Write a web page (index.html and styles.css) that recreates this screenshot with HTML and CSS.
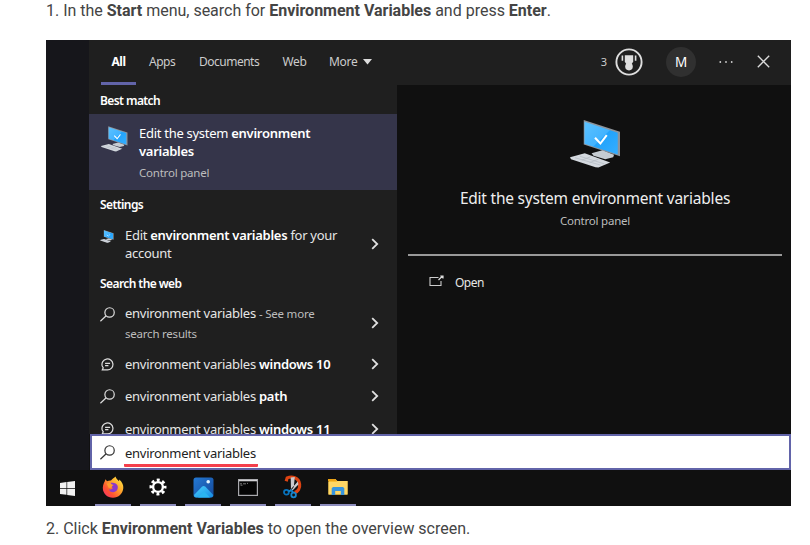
FILE: index.html
```html
<!DOCTYPE html>
<html lang="en">
<head>
<meta charset="utf-8">
<title>Environment Variables</title>
<link rel="stylesheet" href="styles.css">
</head>
<body>
<svg width="0" height="0" class="defs" aria-hidden="true">
  <defs>
    <linearGradient id="screen" x1="0" y1="0" x2="1" y2="1"><stop offset="0" stop-color="#5cc2ff"/><stop offset=".5" stop-color="#42b3ff"/><stop offset=".52" stop-color="#22a3fb"/><stop offset="1" stop-color="#35aeff"/></linearGradient>
    <linearGradient id="fox" x1="1" y1="0" x2="0" y2="1"><stop offset="0" stop-color="#fff24a"/><stop offset=".4" stop-color="#ffa52b"/><stop offset=".7" stop-color="#ff5232"/><stop offset="1" stop-color="#f52b7b"/></linearGradient>
    <linearGradient id="photo" x1="0" y1="0" x2="1" y2="1"><stop offset="0" stop-color="#2479d4"/><stop offset="1" stop-color="#144899"/></linearGradient>
    <linearGradient id="hill" x1="0" y1="0" x2="1" y2="1"><stop offset="0" stop-color="#48d4ff"/><stop offset="1" stop-color="#1688e0"/></linearGradient>
    <symbol id="computer" viewBox="0 0 52 49">
      <path d="M14 0 51 12V37L14 25Z" fill="#8d949c"/>
      <path d="M14.8 1.8 48.7 13V35.2L14.8 24.2Z" fill="url(#screen)"/>
      <path d="M25.5 18.2 31 24 37.5 15.5" fill="none" stroke="#fff" stroke-width="2.1"/>
      <path d="M22 34 33 31 45 35.5 44 38 36 40 24 36.5Z" fill="#c6ccd2"/>
      <path d="M0 38 15 34 41 43.5 29 48.5 26 48.3 1 40Z" fill="#d4d9df"/>
      <path d="M5 38.5 31 46M10 37 35 44.8M12 41 21 37.5M20 43.5 29 40" stroke="#b2b9c2" stroke-width=".7" fill="none"/>
    </symbol>
    <symbol id="search" viewBox="0 0 16 16"><circle cx="10.2" cy="5.8" r="5"/><path d="M6.6 9.4 .4 15.2"/></symbol>
    <symbol id="chat" viewBox="0 0 14 14"><path d="M1.4 12.8H7A5.9 5.9 0 1 0 1.3 8.6L2.4 10.5Z"/><path d="M4.4 5.7H9.8M4.4 8.2H8"/></symbol>
    <symbol id="chevron" viewBox="0 0 8 12"><path d="M1.2 1.2 6.2 6 1.2 10.8"/></symbol>
  </defs>
</svg>
<main class="article">
  <p class="step step-first">1. In the <b>Start</b> menu, search for <b>Environment Variables</b> and press <b>Enter</b>.</p>
  <section class="desktop">
    <div class="wallpaper"></div>
    <div class="start">
      <header class="topbar">
        <nav class="tabs">
          <span class="tab tab-all">All</span><span class="tab tab-apps">Apps</span><span class="tab tab-docs">Documents</span><span class="tab tab-web">Web</span><span class="tab tab-more">More</span>
          <svg class="caret" viewBox="0 0 9 6"><path d="M0 0H9L4.5 5.5Z" fill="#ddd"/></svg>
        </nav>
        <div class="account">
          <span class="points">3</span>
          <svg class="trophy" viewBox="0 0 28 28"><circle cx="14" cy="14" r="12.6" fill="none" stroke="#dedede" stroke-width="1.9"/><path d="M9.8 7.3H18.2V13.8L16.3 16.6H11.7L9.8 13.8Z" fill="#dedede"/><circle cx="14" cy="18.6" r="3.8" fill="#dedede"/><path d="M7.4 7.6V12.8M20.6 7.6V12.8" stroke="#dedede" stroke-width="1.6"/></svg>
          <span class="avatar">M</span>
          <svg class="dots" viewBox="0 0 14 4"><g fill="#cfcfcf"><circle cx="1.3" cy="2" r=".9"/><circle cx="7" cy="2" r=".9"/><circle cx="12.7" cy="2" r=".9"/></g></svg>
          <svg class="close" viewBox="0 0 13 13"><path d="M.8.8 12.2 12.2M12.2.8.8 12.2" stroke="#dcdcdc" stroke-width="1.3"/></svg>
        </div>
      </header>
      <div class="panes">
        <div class="results">
          <h2 class="group group-best">Best match</h2>
          <div class="best">
            <svg class="best-icon"><use href="#computer"/></svg>
            <div class="text"><div class="line">Edit the system <b>environment</b></div><div class="line"><b>variables</b></div><div class="sub sub-best">Control panel</div></div>
          </div>
          <h2 class="group group-settings">Settings</h2>
          <div class="row row-tall">
            <svg class="mini-icon"><use href="#computer"/></svg>
            <div class="text"><div class="line">Edit <b>environment variables</b> for your</div><div class="line">account</div></div>
            <svg class="chevron"><use href="#chevron"/></svg>
          </div>
          <h2 class="group group-web">Search the web</h2>
          <div class="row row-tall row-web">
            <svg class="glyph"><use href="#search"/></svg>
            <div class="text"><div class="line">environment variables <span class="sub">- See more</span></div><div class="sub sub-more">search results</div></div>
            <svg class="chevron"><use href="#chevron"/></svg>
          </div>
          <div class="row"><svg class="glyph chat"><use href="#chat"/></svg><div class="text line">environment variables <b>windows 10</b></div><svg class="chevron"><use href="#chevron"/></svg></div>
          <div class="row"><svg class="glyph"><use href="#search"/></svg><div class="text line">environment variables <b>path</b></div><svg class="chevron"><use href="#chevron"/></svg></div>
          <div class="row"><svg class="glyph chat"><use href="#chat"/></svg><div class="text line">environment variables <b>windows 11</b></div><svg class="chevron"><use href="#chevron"/></svg></div>
        </div>
        <div class="preview">
          <svg class="hero"><use href="#computer"/></svg>
          <div class="hero-title">Edit the system environment variables</div>
          <div class="sub hero-sub">Control panel</div>
          <div class="rule"></div>
          <div class="open"><svg class="open-icon" viewBox="0 0 15 12"><path d="M9.5 2.5H1V10.5H12V6" fill="none" stroke="#ccc" stroke-width="1.1"/><path d="M9.5 5 13.5 1M11.3 1H14V3.5" fill="none" stroke="#ddd" stroke-width="1.2"/></svg><span>Open</span></div>
        </div>
      </div>
      <div class="searchbox"><svg class="glyph"><use href="#search"/></svg><span class="query">environment variables</span></div>
    </div>
    <footer class="taskbar">
      <div class="task task-start"><svg width="15" height="15" viewBox="0 0 15 15"><path d="M0 2 6.5 1.1V7H0ZM7.2 1 15 0V7H7.2ZM0 7.8H6.5V13.8L0 12.9ZM7.2 7.8H15V15L7.2 13.9Z" fill="#f2f2f2"/></svg></div>
      <div class="task running"><svg width="22" height="22" viewBox="0 0 22 22"><path d="M3.5 3.2 5 5.2C6.3 4.6 8 4.3 9 4.5 10.5 2.9 12.2 1.8 13.5.6 14 3 16 4 17 5.3L17.3 3.5C20.3 6.3 21.5 9 21.3 12.1 20.9 17.9 16.5 21.8 11 21.8 5.4 21.8.8 17.8.8 11.8.8 8.2 2.6 6.3 3.5 3.2Z" fill="url(#fox)"/><path d="M6.2 8.2C8.3 6.2 14.3 6 15.6 9.8 16.5 13 14.4 16.2 11.1 16.2 8.8 16.2 7.3 14.8 7 13.4 8.5 14 10 13.2 11 12.1 8.9 11.5 9.4 10.4 11 9.8Z" fill="#8b38cb"/><path d="M4.6 7.4 8.5 6.8C9.3 8 9 8.5 11.8 9 10.3 9.4 9.5 10.4 9.6 11.4L6.8 12Z" fill="#ff9c2c"/></svg></div>
      <div class="task running"><svg width="18" height="18" viewBox="0 0 18 18"><circle cx="9" cy="9" r="4.9" fill="none" stroke="#fff" stroke-width="2.4"/><circle cx="9" cy="9" r="7" fill="none" stroke="#fff" stroke-width="3" stroke-dasharray="2.9 2.598" stroke-dashoffset="1.45"/></svg></div>
      <div class="task running"><svg width="21" height="21" viewBox="0 0 21 21"><rect x=".5" y=".5" width="20" height="20" rx="2.5" fill="url(#photo)"/><path d="M1 18 9.2 9.6Q10.7 8.2 12.2 9.6L20.3 18Q20 20.5 17.8 20.5H3.2Q1 20.5 1 18Z" fill="url(#hill)"/><path d="M5 20.5 11 14.3 17 20.5Z" fill="#2ab4ef"/><circle cx="15.2" cy="4.8" r="1.8" fill="#e2f5ff"/></svg></div>
      <div class="task running"><svg width="20" height="17" viewBox="0 0 20 17"><rect x=".6" y=".6" width="18.8" height="15.8" fill="#050505" stroke="#a9a9ad" stroke-width="1.2"/><path d="M1 1.6H19" stroke="#d1d1d4" stroke-width="1.4"/><path d="M2 4.8H4M5 4.8H8M9 4.4H10M2.5 6.2H4.5" stroke="#999" stroke-width=".8"/></svg></div>
      <div class="task running"><svg width="20" height="22" viewBox="0 0 20 22"><path d="M3.2 5.2 4.2 1.9C8.7 0 15.9 1.1 16.6 8.1 17.2 12.4 14.8 15.5 11.7 16.6" fill="none" stroke="#dd4312" stroke-width="3.2"/><path d="M7.7 1.5 11.8 1 10.8 11 8 14.8ZM14.8 5.4 6.7 14.5 9.8 14.2 15.4 8.5Z" fill="#c9c9cd"/><circle cx="3.4" cy="16.2" r="2.4" fill="none" stroke="#0873bd" stroke-width="1.8"/><circle cx="10.6" cy="19" r="2.3" fill="none" stroke="#1587d0" stroke-width="1.8"/><path d="M5.6 15.4 8.4 14.4 10.4 16.8" fill="none" stroke="#1587d0" stroke-width="1.8"/></svg></div>
      <div class="task running"><svg width="20" height="18" viewBox="0 0 20 18"><path d="M.5 1H7.4L9.4 3H19.5V16.5H.5Z" fill="#ffc83d"/><path d="M0 1H7.2L9 3.2H0Z" fill="#eba316"/><path d="M.5 4H8.5L9.8 3H19.5V16.5H.5Z" fill="#ffd765"/><path d="M3.7 17V10.2L5 9H15L16.3 10.2V17H12.8V13H7.2V17Z" fill="#3795de"/></svg></div>
    </footer>
  </section>
  <p class="step step-last">2. Click <b>Environment Variables</b> to open the overview screen.</p>
</main>
</body>
</html>
```

FILE: styles.css
```css
* { box-sizing: border-box; }
body { margin: 0; background: #fff; overflow: hidden; }
svg { display: block; flex: none; overflow: visible; }
.defs { position: absolute; }
.article { width: 745px; margin-left: 46px; }
.step { margin: 0; color: #444; font: 400 16px/22px Roboto, sans-serif; letter-spacing: -0.01px; white-space: nowrap; }
.step b { font-weight: 700; }
.step-first { height: 40px; }
.step-last { padding-top: 12px; }
.desktop {
  display: grid; grid-template: 430px 36px / 43px 702px;
  width: 745px; height: 466px; background: #101010;
  color: #e6e6e6; font: 13px/18px "Noto Sans", sans-serif; white-space: nowrap;
}
.wallpaper { background: #16161b; }
.start { display: grid; grid-template-rows: 45px 349px 36px; min-width: 0; }
.topbar { display: flex; justify-content: space-between; background: #1f1f1f; }
.tabs { display: flex; align-items: stretch; padding-left: 12px; font-size: 12px; line-height: 44px; color: #ccc; }
.tab-all { width: 35px; text-align: center; font-weight: 700; color: #fff; border-bottom: 3px solid #6264a9; }
.tab-apps { width: 50px; padding-left: 13px; }
.tab-docs { width: 84px; padding-left: 13px; }
.tab-web { width: 47px; padding-left: 12.5px; }
.tab-more { width: 46px; padding-left: 12px; }
.tab { letter-spacing: -0.5px; }
.tab-web, .tab-more { letter-spacing: -0.3px; }
.caret { width: 9px; height: 6px; margin: 19px 0 0; }
.account { display: flex; align-items: center; height: 43px; padding-right: 21px; }
.points { font-size: 11px; margin-right: 8px; color: #ccc; }
.trophy { width: 28px; height: 28px; margin-right: 23px; }
.avatar { width: 30px; height: 30px; border-radius: 50%; background: #303030; text-align: center; font-size: 13.5px; line-height: 30px; color: #fff; margin-right: 23px; }
.dots { width: 14px; height: 4px; margin-right: 24px; }
.close { width: 13px; height: 13px; }
.panes { display: grid; grid-template-columns: 308px 394px; height: 349px; overflow: hidden; }
.results { background: #1f1f1f; }
.group { margin: 0; padding-left: 11px; font-size: 12px; font-weight: 600; letter-spacing: -0.58px; color: #fff; }
.group-best { height: 29px; line-height: 31px; }
.group-settings { height: 29px; line-height: 30px; }
.group-web { height: 29px; line-height: 29px; }
.best { display: flex; height: 76px; padding: 10px 0 0 12px; background: #35354a; color: #fff; }
.best-icon { width: 27px; height: 26px; margin: 2px 11px 0 0; }
.line { font-size: 13px; line-height: 18px; letter-spacing: -0.28px; }
.line b { font-weight: 600; color: #fff; }
.sub { font-size: 11.5px; color: #bdbdbd; letter-spacing: -0.22px; }
.sub-best { margin-top: 4px; }
.row { display: flex; align-items: center; height: 32.3px; padding: 0 18px 0 11px; }
.row-tall { height: 50px; }
.row-web .line { margin-top: 1px; }
.text { flex: 1; }
.mini-icon { width: 14px; height: 13px; margin: 0 11px 16px 0; }
.glyph { width: 15px; height: 15px; margin-right: 10px; fill: none; stroke: #ddd; stroke-width: 1.3; }
.row-tall .glyph { margin-bottom: 18px; }
.chat { width: 13px; height: 13px; margin: 0 11px 0 1px; }
.chevron { width: 8px; height: 12px; fill: none; stroke: #e0e0e0; stroke-width: 1.8; }
.sub-more { margin-top: 2px; }
.preview { display: flex; flex-direction: column; align-items: center; padding: 35px 9px 0 11px; background: #101010; }
.hero { width: 51px; height: 48px; }
.hero-title { margin-top: 18px; font-size: 15.5px; line-height: 24px; letter-spacing: -0.22px; color: #eee; }
.hero-sub { margin-top: 2px; line-height: 18px; }
.rule { width: 374px; height: 2px; margin-top: 24px; background: #999; }
.open { align-self: flex-start; display: flex; align-items: center; gap: 11px; margin: 18px 0 0 21px; font-size: 12px; letter-spacing: -0.5px; }
.open-icon { width: 15px; height: 12px; margin-bottom: 5px; }
.searchbox { display: flex; align-items: center; margin-left: 1px; padding-left: 8px; border: 2px solid #6264a9; background: #fff; color: #222; }
.searchbox .glyph { stroke: #333; margin-right: 9px; }
.query { padding: 0 2px 0 1px; font-size: 13px; line-height: 22px; height: 25px; letter-spacing: -0.28px; border-bottom: 3px solid #f43f4b; border-radius: 1px; margin-top: 4px; }
.taskbar { grid-column: 1 / 3; display: flex; gap: 9px; }
.task { display: flex; align-items: center; justify-content: center; width: 36px; height: 36px; }
.task-start { width: 40px; padding-left: 3px; margin-right: 0; }
.running { border-bottom: 2px solid #8d8dbd; }
```
